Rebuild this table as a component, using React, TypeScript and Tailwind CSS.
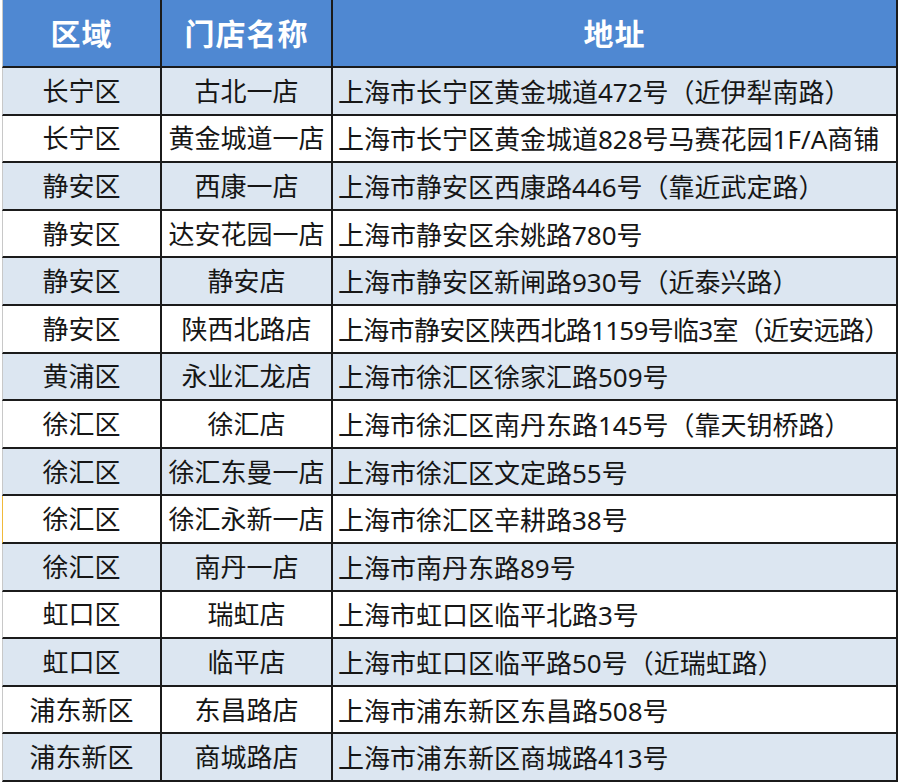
import React from 'react';

interface StoreRow {
  district: string;
  name: string;
  address: string;
  tight?: boolean;
}

const stores: StoreRow[] = [
  { district: '长宁区', name: '古北一店', address: '上海市长宁区黄金城道472号（近伊犁南路）' },
  { district: '长宁区', name: '黄金城道一店', address: '上海市长宁区黄金城道828号马赛花园1F/A商铺' },
  { district: '静安区', name: '西康一店', address: '上海市静安区西康路446号（靠近武定路）' },
  { district: '静安区', name: '达安花园一店', address: '上海市静安区余姚路780号' },
  { district: '静安区', name: '静安店', address: '上海市静安区新闸路930号（近泰兴路）' },
  { district: '静安区', name: '陕西北路店', address: '上海市静安区陕西北路1159号临3室（近安远路）', tight: true },
  { district: '黄浦区', name: '永业汇龙店', address: '上海市徐汇区徐家汇路509号' },
  { district: '徐汇区', name: '徐汇店', address: '上海市徐汇区南丹东路145号（靠天钥桥路）' },
  { district: '徐汇区', name: '徐汇东曼一店', address: '上海市徐汇区文定路55号' },
  { district: '徐汇区', name: '徐汇永新一店', address: '上海市徐汇区辛耕路38号' },
  { district: '徐汇区', name: '南丹一店', address: '上海市南丹东路89号' },
  { district: '虹口区', name: '瑞虹店', address: '上海市虹口区临平北路3号' },
  { district: '虹口区', name: '临平店', address: '上海市虹口区临平路50号（近瑞虹路）' },
  { district: '浦东新区', name: '东昌路店', address: '上海市浦东新区东昌路508号' },
  { district: '浦东新区', name: '商城路店', address: '上海市浦东新区商城路413号' },
];

export default function App() {
  return (
    <div
      className="w-[900px] h-[782px] overflow-hidden bg-white text-[#161616]"
      style={{ fontFamily: '"Noto Sans", "Noto Sans CJK SC", sans-serif' }}
    >
      <div className="ml-[2px] w-[896px]">
        {/* header */}
        <div className="flex h-[68px] bg-[#4f88d2] border-l border-[#c8c8c8] border-b-2 border-b-[#1b1b1b] text-white font-bold text-[30px] tracking-[1px]">
          <div className="w-[159px] shrink-0 flex items-center justify-center border-r-2 border-[#1b1b1b]">区域</div>
          <div className="w-[171px] shrink-0 flex items-center justify-center border-r-2 border-[#1b1b1b]">门店名称</div>
          <div className="flex-1 min-w-0 flex items-center justify-center border-r-2 border-[#1b1b1b]">地址</div>
        </div>

        {stores.map((row, i) => (
          <div
            key={i}
            className={`flex h-[47.6px] border-b-2 border-b-[#1b1b1b] text-[26px] leading-none ${
              i % 2 === 0 ? 'bg-[#dce6f1]' : 'bg-white'
            } ${i === 9 ? 'border-l border-l-[#f0b93a]' : 'border-l border-l-[#c8c8c8]'}`}
          >
            <div className="w-[159px] shrink-0 flex items-center justify-center border-r-2 border-[#1b1b1b] whitespace-nowrap">
              {row.district}
            </div>
            <div className="w-[171px] shrink-0 flex items-center justify-center border-r-2 border-[#1b1b1b] whitespace-nowrap">
              {row.name}
            </div>
            <div
              className={`flex-1 min-w-0 flex items-center pl-[5px] pt-[2px] border-r-2 border-[#1b1b1b] whitespace-nowrap ${
                row.tight ? 'tracking-[-0.7px]' : ''
              }`}
            >
              {row.address}
            </div>
          </div>
        ))}
      </div>
    </div>
  );
}
